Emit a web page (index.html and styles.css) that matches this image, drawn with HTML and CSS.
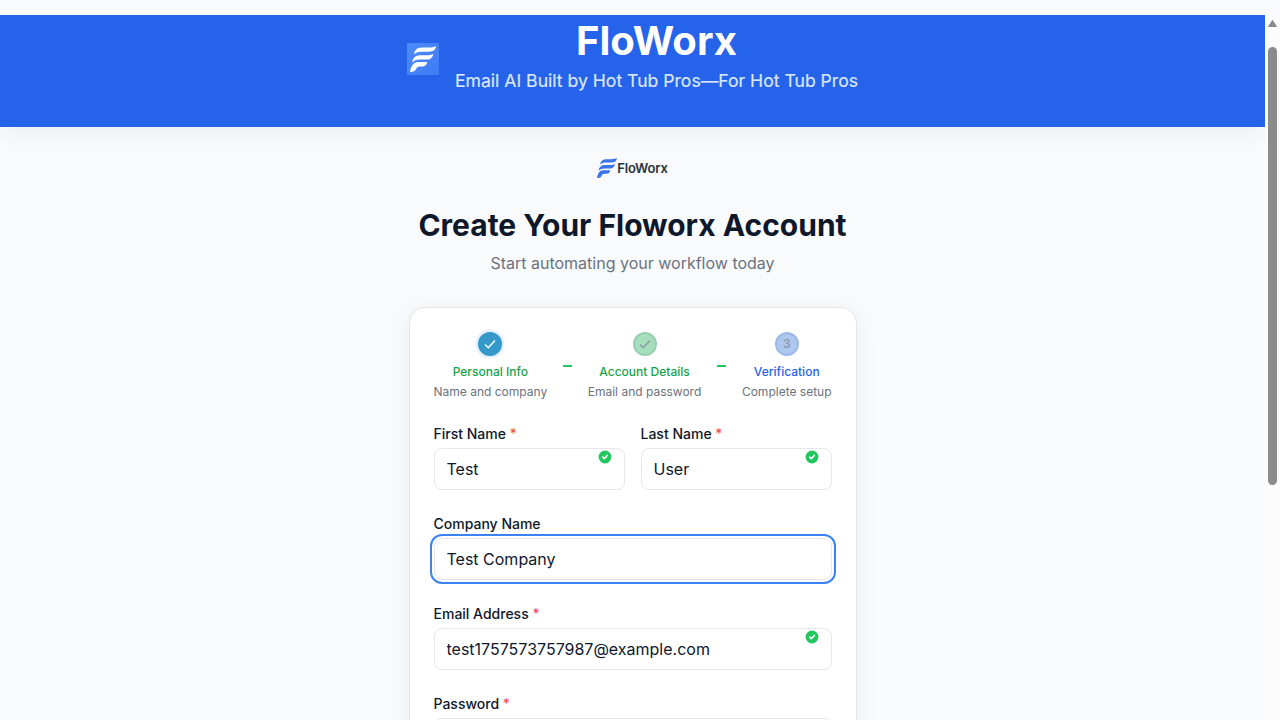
FILE: index.html
```html
<!DOCTYPE html>
<html lang="en">
<head>
<meta charset="utf-8">
<title>FloWorx</title>
<link rel="stylesheet" href="styles.css">
</head>
<body>
<svg class="defs" width="0" height="0" aria-hidden="true">
  <symbol id="mark" viewBox="0 0 26 26">
    <path d="M4 8.400C4.500 4.300 7 1.500 11.500 1.500H18C21.500 1.500 24 1 26 0C25.500 3.600 23.500 5.700 19.500 5.700H11C8 5.700 5.800 6.700 4 8.400Z"/>
    <path d="M2.200 16.400C2.700 12 5.500 9.200 10 9.200H16C19.500 9.200 21.300 8.700 23.300 7.700C22.700 11.400 20.700 13.500 17 13.500H9.500C6.300 13.500 4.200 14.500 2.200 16.400Z"/>
    <path d="M0 26C1 20.500 3 16 8.500 16H17.300C16.600 19 15 20.600 12 20.600H9.800C7.600 20.600 6.800 21.500 6.100 23C5.200 25 3.500 26 0 26Z"/>
  </symbol>
  <symbol id="valid" viewBox="0 0 20 20">
    <path fill-rule="evenodd" d="M10 18a8 8 0 100-16 8 8 0 000 16zm3.707-9.293a1 1 0 00-1.414-1.414L9 10.586 7.707 9.293a1 1 0 00-1.414 1.414l2 2a1 1 0 001.414 0l4-4z"/>
  </symbol>
</svg>
<div class="window">
  <div class="page">
    <header class="banner">
      <div class="banner-logo"><svg class="banner-mark"><use href="#mark"/></svg></div>
      <div class="banner-text">
        <div class="banner-title">FloWorx</div>
        <div class="banner-tagline">Email AI Built by Hot Tub Pros—For Hot Tub Pros</div>
      </div>
    </header>
    <main class="main">
      <div class="brand"><svg class="brand-mark"><use href="#mark"/></svg><span class="brand-name">FloWorx</span></div>
      <h1 class="title">Create Your Floworx Account</h1>
      <p class="subtitle">Start automating your workflow today</p>
      <form class="card">
        <div class="steps">
          <div class="step">
            <span class="dot current"><svg class="tick" viewBox="0 0 12 12"><path d="M1 6.500L4.300 9.700L11 2.500"/></svg></span>
            <span class="step-name">Personal Info</span>
            <span class="step-note">Name and company</span>
          </div>
          <span class="link"></span>
          <div class="step">
            <span class="dot done"><svg class="tick" viewBox="0 0 12 12"><path d="M1 6.500L4.300 9.700L11 2.500"/></svg></span>
            <span class="step-name">Account Details</span>
            <span class="step-note">Email and password</span>
          </div>
          <span class="link"></span>
          <div class="step">
            <span class="dot next">3</span>
            <span class="step-name active">Verification</span>
            <span class="step-note">Complete setup</span>
          </div>
        </div>
        <div class="fields">
          <div class="row">
            <div class="field"><label class="label">First Name <span class="req">*</span></label>
              <div class="box"><input class="input" value="Test"><svg class="valid"><use href="#valid"/></svg></div></div>
            <div class="field"><label class="label">Last Name <span class="req">*</span></label>
              <div class="box"><input class="input" value="User"><svg class="valid"><use href="#valid"/></svg></div></div>
          </div>
          <div class="field"><label class="label">Company Name</label>
            <div class="box"><input class="input focused" value="Test Company"></div></div>
          <div class="field"><label class="label">Email Address <span class="req">*</span></label>
            <div class="box"><input class="input" value="test1757573757987@example.com"><svg class="valid"><use href="#valid"/></svg></div></div>
          <div class="field"><label class="label">Password <span class="req">*</span></label>
            <div class="box"><input class="input" type="password"></div></div>
        </div>
      </form>
    </main>
  </div>
  <div class="scrollbar">
    <svg class="arrow" viewBox="0 0 9 7"><path d="M4.500 0.500L8.500 6.500H0.500Z"/></svg>
    <div class="thumb"></div>
  </div>
</div>
</body>
</html>
```

FILE: styles.css
```css
* { box-sizing: border-box; }
body {
  margin: 0;
  padding-top: 15px;
  height: 720px;
  overflow: hidden;
  background: #f8fafc;
  color: #0f172a;
  font-family: Inter, sans-serif;
}
.defs { position: absolute; }
.window { display: flex; height: 705px; overflow: hidden; }
.page { width: 1265px; height: 705px; overflow: hidden; }
.banner {
  display: flex;
  justify-content: center;
  gap: 16px;
  height: 112px;
  background: #2563eb;
  color: #fff;
  box-shadow: 0 4px 24px rgba(0, 0, 0, .06);
}
.banner-logo {
  display: flex;
  align-items: center;
  justify-content: center;
  width: 32px;
  height: 32px;
  margin-top: 28px;
  background: linear-gradient(135deg, #4d8bfa, #3f7cf5);
}
.banner-mark { width: 26px; height: 26px; fill: #fff; }
.banner-text { text-align: center; padding-top: 6px; }
.banner-title { font-size: 40px; line-height: 40px; font-weight: 700; }
.banner-tagline { margin-top: 6px; font-size: 17.6px; line-height: 28px; color: #dbe6fc; -webkit-text-stroke: .2px #dbe6fc; }
.main { display: flex; flex-direction: column; align-items: center; padding-top: 29px; }
.brand { display: flex; align-items: center; height: 22px; padding-top: 1px; }
.brand-mark { width: 20px; height: 20px; fill: #3b74ec; }
.brand-name { font-size: 13px; font-weight: 600; letter-spacing: -.15px; color: #263340; }
.title { margin: 27px 0 0; font-size: 30px; line-height: 40px; font-weight: 700; }
.subtitle { margin: 6px 0 0; font-size: 16px; line-height: 24px; color: #6b7280; }
.card {
  width: 448px;
  height: 720px;
  margin-top: 32px;
  padding: 24px;
  border: 1px solid #e2e5eb;
  border-radius: 16px;
  background: #fff;
  box-shadow: 0 4px 24px rgba(0, 0, 0, .06);
}
.steps { display: flex; align-items: center; }
.step { display: flex; flex-direction: column; align-items: center; font-size: 12px; line-height: 16px; white-space: nowrap; }
.dot {
  display: flex;
  align-items: center;
  justify-content: center;
  width: 24px;
  height: 24px;
  margin-bottom: 8px;
  border-radius: 50%;
  font-weight: 600;
}
.current { background: #3498c9; box-shadow: 0 0 0 2.5px #e6effd; color: #fff; }
.done { background: #a7dfbd; border: 2px solid #97ceb0; color: #8c9aa5; }
.next { background: #aec7ef; border: 2px solid #9db9e8; color: #8b98b0; }
.tick { width: 12px; height: 12px; flex: none; fill: none; stroke: currentColor; stroke-width: 1.4; }
.step-name { font-weight: 500; color: #16a34a; }
.active { color: #2563eb; }
.step-note { margin-top: 4px; color: #6b7280; }
.link { flex: 1; height: 2px; margin: 0 16px; background: #22c55e; }
.fields { display: flex; flex-direction: column; gap: 24px; margin-top: 24px; }
.row { display: grid; grid-template-columns: 1fr 1fr; gap: 16px; }
.label { display: block; font-size: 14px; line-height: 20px; font-weight: 500; }
.req { color: #ef4444; font-weight: 400; }
.box { position: relative; margin-top: 4px; }
.input {
  display: block;
  width: 100%;
  height: 42px;
  padding: 0 12px;
  border: 1px solid #e5e7eb;
  border-radius: 8px;
  background: #fff;
  color: #0f172a;
  font: 16px/24px Inter, sans-serif;
}
.focused { outline: 2px solid #3b82f6; outline-offset: 2px; }
.valid { position: absolute; top: 1px; right: 12px; width: 16px; height: 16px; fill: #22c55e; }
.scrollbar { width: 15px; height: 705px; padding: 5px 3px 0; background: #fcfcfc; }
.arrow { display: block; width: 9px; height: 7px; fill: #8b8b8b; stroke: #8b8b8b; stroke-linejoin: round; }
.thumb { width: 9px; height: 438px; margin-top: 20px; border-radius: 5px; background: #8b8b8b; }
```
